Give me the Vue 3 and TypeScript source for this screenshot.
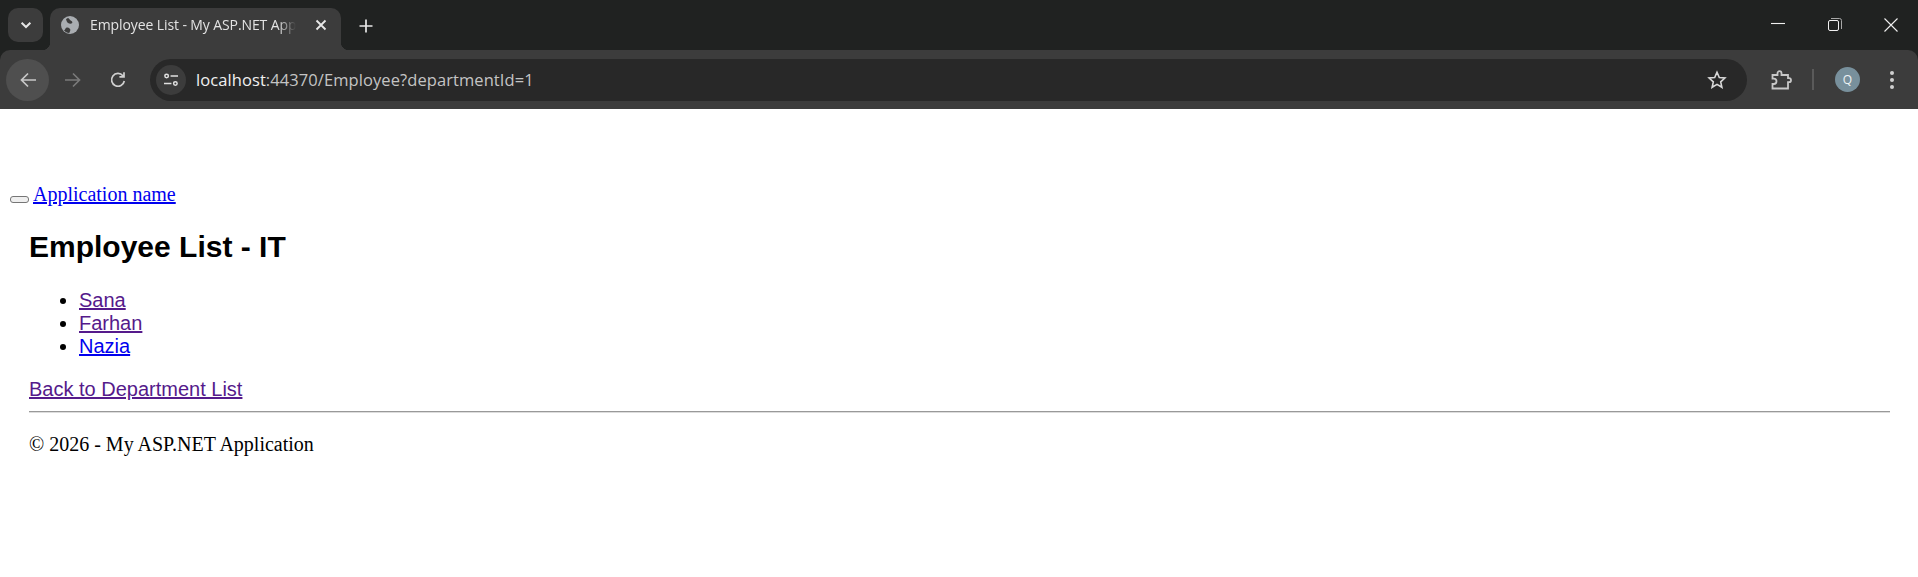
<script setup lang="ts">
const employees: { name: string; visited: boolean }[] = [
  { name: 'Sana', visited: true },
  { name: 'Farhan', visited: true },
  { name: 'Nazia', visited: false },
]
</script>

<template>
  <div class="window">
    <header class="chrome">
      <div class="strip">
        <button class="tab-search" aria-label="Search tabs">
          <svg width="16" height="16" viewBox="0 0 16 16"><path d="M3.6 5.8 8 10l4.400-4.200" fill="none" stroke="#e6e6e6" stroke-width="2" /></svg>
        </button>
        <div class="tab">
          <svg class="globe" width="18" height="18" viewBox="0 0 18 18">
            <circle cx="9" cy="9" r="9" fill="#a9adb1" />
            <path d="M3 14.500c1.500-1 1.300-2.500 2.700-3 1.700-.5 2.800.6 3.500 1.700.5.900-.3 2.300-1 3.800-2-.2-3.800-1-5.200-2.500ZM7 2c1.500.6 1.400 2 3 2.700 1.300.5 1.800 1.700 1 2.500-1.300.9-3 .4-4.300-.5C5.800 6 5.500 4.500 5 3.200 5.500 2.600 6.200 2.200 7 2Z" fill="#3c3c3c" />
          </svg>
          <span class="tab-title">Employee List - My ASP.NET Application</span>
          <svg class="tab-close" width="12" height="12" viewBox="0 0 12 12"><path d="M1.500 1.500l9 9m0-9-9 9" stroke="#e8e8e8" stroke-width="1.800" fill="none" /></svg>
        </div>
        <svg class="new-tab" width="14" height="14" viewBox="0 0 14 14"><path d="M7 .5v13M.5 7h13" stroke="#e8e8e8" stroke-width="1.700" fill="none" /></svg>
        <div class="window-controls">
          <svg width="14" height="14" viewBox="0 0 14 14"><path d="M0 5.500h14" stroke="#f0f0f0" stroke-width="1.100" fill="none" /></svg>
          <svg width="14" height="14" viewBox="0 0 14 14" fill="none" stroke="#f0f0f0"><rect x=".5" y="2.500" width="10" height="10" rx="1.500" /><path d="M3 .5h8.500a2 2 0 0 1 2 2V11" stroke="#a8a8a8" /></svg>
          <svg width="14" height="14" viewBox="0 0 14 14"><path d="M.5.5l13 13m0-13-13 13" stroke="#f0f0f0" stroke-width="1.100" fill="none" /></svg>
        </div>
      </div>
      <div class="toolbar">
        <div class="nav-button active">
          <svg width="18" height="18" viewBox="0 0 18 18" fill="none" stroke="#c8c8c8" stroke-width="1.700"><path d="M17 9H2.500M9 2.500 2.500 9 9 15.500" /></svg>
        </div>
        <div class="nav-button">
          <svg width="18" height="18" viewBox="0 0 18 18" fill="none" stroke="#7a7a7a" stroke-width="1.700"><path d="M1 9h14.500M9 2.500 15.500 9 9 15.500" /></svg>
        </div>
        <div class="nav-button">
          <svg width="18" height="18" viewBox="0 0 18 18" fill="none" stroke="#d0d0d0" stroke-width="1.700"><path d="M15.300 10a6.400 6.400 0 1 1-1.400-5.300M15 1.200v4.600h-4.600" /></svg>
        </div>
        <div class="omnibox">
          <div class="site-info">
            <svg width="18" height="16" viewBox="0 0 18 16" fill="none" stroke="#e0e0e0" stroke-width="1.700"><circle cx="4" cy="3.500" r="2" /><path d="M8.500 3.500H17M1 12h8.500" /><circle cx="14" cy="12" r="2" /></svg>
          </div>
          <span class="url"><span class="host">localhost</span>:44370/Employee?departmentId=1</span>
          <svg class="star" width="20" height="20" viewBox="0 0 20 20"><path d="M10 2.300l2.300 5.200 5.600.5-4.200 3.800 1.200 5.500L10 14.400l-4.900 2.900 1.200-5.500L2.100 8l5.600-.5Z" fill="none" stroke="#d8d8d8" stroke-width="1.600" /></svg>
        </div>
        <div class="toolbar-actions">
          <svg class="puzzle" width="22" height="22" viewBox="0 0 22 22"><path d="M2.500 6H7.500V4.200a2 2 0 0 1 4 0V6H18v3.200h1a2 2 0 0 1 0 4h-1V19.500H2.500v-4.500h1.300a2.700 2.700 0 0 0 0-5.400H2.500Z" fill="none" stroke="#c8c8c8" stroke-width="1.800" /></svg>
          <span class="divider"></span>
          <span class="avatar">Q</span>
          <svg class="kebab" width="6" height="20" viewBox="0 0 6 20" fill="#d0d0d0"><circle cx="3" cy="3" r="2" /><circle cx="3" cy="10" r="2" /><circle cx="3" cy="17" r="2" /></svg>
        </div>
      </div>
    </header>

    <main class="page">
      <div class="navbar">
        <button class="toggle"></button>
        <a class="brand" href="#">Application name</a>
      </div>
      <div class="body-content">
        <h2>Employee List - IT</h2>
        <ul>
          <li v-for="e in employees" :key="e.name">
            <a href="#" :class="{ visited: e.visited }">{{ e.name }}</a>
          </li>
        </ul>
        <p class="back"><a href="#" class="visited">Back to Department List</a></p>
        <hr />
        <footer>© 2026 - My ASP.NET Application</footer>
      </div>
    </main>
  </div>
</template>

<style>
html, body { margin: 0; background: #fff; }
</style>

<style scoped>
.window {
  height: 577px;
  overflow: hidden;
  background: #fff;
  display: flex;
  flex-direction: column;
}
.chrome {
  background: #202221;
  flex: none;
  height: 109px;
  display: flex;
  flex-direction: column;
}
.strip {
  height: 50px;
  display: flex;
  align-items: flex-start;
  flex: none;
}
.tab-search {
  margin: 8px 0 0 8px;
  width: 35px;
  height: 34px;
  border: 0;
  padding: 0;
  border-radius: 10px;
  background: #3c3c3c;
  display: flex;
  align-items: center;
  justify-content: center;
}
.tab {
  margin: 8px 0 0 7px;
  width: 291px;
  height: 42px;
  box-sizing: border-box;
  padding: 0 0 8px 11px;
  background: #3c3c3c;
  border-radius: 10px 10px 0 0;
  display: flex;
  align-items: center;
  position: relative;
}
.tab::before,
.tab::after {
  content: '';
  position: absolute;
  bottom: 0;
  width: 8px;
  height: 8px;
}
.tab::before {
  left: -8px;
  background: radial-gradient(circle at 0 0, transparent 8px, #3c3c3c 8.5px);
}
.tab::after {
  right: -8px;
  background: radial-gradient(circle at 100% 0, transparent 8px, #3c3c3c 8.5px);
}
.globe { flex: none; }
.tab-title {
  margin-left: 11px;
  width: 208px;
  flex: none;
  overflow: hidden;
  white-space: nowrap;
  font: 14px/20px "Open Sans", "Noto Sans", sans-serif;
  letter-spacing: -0.1px;
  color: #e3e3e3;
  -webkit-mask-image: linear-gradient(90deg, #000 188px, transparent 206px);
  mask-image: linear-gradient(90deg, #000 188px, transparent 206px);
}
.tab-close { margin-left: 17px; flex: none; }
.new-tab { margin: 19px 0 0 18px; flex: none; }
.window-controls {
  margin-left: auto;
  margin-top: 18px;
  display: flex;
  gap: 42.500px;
  padding-right: 20px;
}
.toolbar {
  flex: 1;
  background: #3c3c3c;
  border-radius: 10px 10px 0 0;
  display: flex;
  align-items: center;
  padding: 0 0 0 6px;
}
.nav-button {
  width: 43px;
  height: 42px;
  margin-right: 2px;
  border-radius: 50%;
  display: flex;
  align-items: center;
  justify-content: center;
  flex: none;
}
.nav-button.active { background: #4f4f4f; }
.omnibox {
  margin-left: 9px;
  width: 1597px;
  height: 42px;
  flex: none;
  box-sizing: border-box;
  border-radius: 21px;
  background: #282828;
  display: flex;
  align-items: center;
  padding: 0 20px 0 6px;
}
.site-info {
  width: 30px;
  height: 30px;
  margin-right: 10px;
  border-radius: 50%;
  background: #3c3c3c;
  display: flex;
  align-items: center;
  justify-content: center;
  flex: none;
}
.site-info svg { width: 16px; height: 14px; }
.url {
  font: 16.500px/22px "Open Sans", "Noto Sans", sans-serif;
  letter-spacing: 0.08px;
  color: #c4c4c4;
}
.host { color: #f0f0f0; }
.star { margin-left: auto; }
.toolbar-actions {
  display: flex;
  align-items: center;
  margin-left: 23px;
}
.divider {
  width: 2px;
  height: 21px;
  margin: 0 21px 0 20px;
  background: #5a5a5a;
}
.avatar {
  width: 25px;
  height: 25px;
  border-radius: 50%;
  background: #78909c;
  color: #eef2f4;
  font: 12px/25px "Open Sans", sans-serif;
  text-align: center;
}
.kebab { margin-left: 29px; }

.page {
  flex: 1;
  color: #000;
}
.navbar {
  padding: 74px 0 0 10px;
  display: flex;
  align-items: flex-end;
  height: 23px;
}
.toggle {
  width: 19px;
  height: 7px;
  padding: 0;
  box-sizing: border-box;
  background: #efefef;
  border: 1px solid #767676;
  border-radius: 3px;
  margin-bottom: 3px;
}
.brand {
  margin-left: 4px;
  font: 20px/23px "Liberation Serif", serif;
  color: #0000ee;
}
.body-content { padding: 0 28px 0 29px; }
h2 {
  margin: 21px 0 0;
  font: bold 30px/40px "Liberation Sans", Arial, sans-serif;
}
ul {
  margin: 22px 0 0;
  padding: 0 0 0 50px;
  font: 20px/23px "Liberation Sans", Arial, sans-serif;
}
a { color: #0000ee; }
a.visited { color: #551a8b; }
.back {
  margin: 20px 0 0;
  font: 20px/23px "Liberation Sans", Arial, sans-serif;
}
hr {
  margin: 10px 0 0;
  border: 0;
  border-top: 1px solid #999;
  border-bottom: 1px solid #ddd;
}
footer {
  margin-top: 20px;
  font: 20px/23px "Liberation Serif", serif;
}
</style>
